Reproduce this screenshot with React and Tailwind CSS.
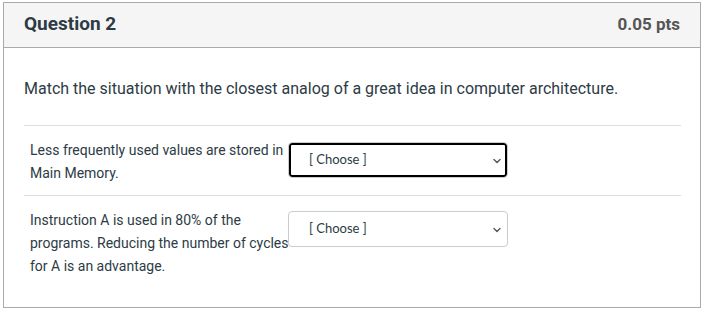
import { useState } from 'react'

const rows = [
  { id: 1, text: 'Less frequently used values are stored in Main Memory.', focused: true },
  { id: 2, text: 'Instruction A is used in 80% of the programs. Reducing the number of cycles for A is an advantage.', focused: false },
]

function Chevron() {
  return (
    <svg width="10" height="10" viewBox="0 0 10 10" fill="none" stroke="#555" strokeWidth="1.4"
         strokeLinecap="round" strokeLinejoin="round">
      <path d="M2 3.5l3 3 3-3" />
    </svg>
  )
}

function ChooseSelect({ focused }) {
  const [value, setValue] = useState('')
  return (
    <div className={`relative w-[220px] h-[36px] rounded-[4px] border border-[#c7cdd1] bg-white shrink-0
                     ${focused ? 'shadow-[inset_0_0_0_2px_#000]' : ''}`}>
      <select
        value={value}
        onChange={e => setValue(e.target.value)}
        className="appearance-none w-full h-full bg-transparent pl-[20px] pr-8 text-[13px] text-[#2d3b45] outline-none"
        style={{ fontFamily: 'Lato, "Noto Sans", sans-serif' }}
      >
        <option value="">[ Choose ]</option>
      </select>
      <span className="absolute right-[5px] top-[13px] pointer-events-none">
        <Chevron />
      </span>
    </div>
  )
}

export default function App() {
  return (
    <div className="w-[702px] h-[312px] bg-white pt-[2px] pl-[3px]"
         style={{ fontFamily: 'Roboto, "Liberation Sans", sans-serif' }}>
      <div className="w-[698px] h-[306px] border border-[#aaaaaa] bg-white">

        {/* Header */}
        <div className="h-[45px] bg-[#f5f5f5] border-b border-[#aaaaaa] flex items-center justify-between pl-[20px] pr-[20px] pb-[1px]">
          <span className="text-[19px] font-bold text-[#2d3b45]">Question 2</span>
          <span className="text-[17px] font-bold text-[#555555]">0.05 pts</span>
        </div>

        {/* Body */}
        <div className="pl-[20px] pr-[19px]">
          <p className="text-[16px] leading-[24px] text-[#2d3b45] mt-[29px] mb-[24px]">
            Match the situation with the closest analog of a great idea in computer architecture.
          </p>

          {rows.map(r => (
            <div key={r.id} className="border-t border-[#dddddd] flex pl-[6px] pt-[13px] pb-[10px]">
              <div className="w-[264px] shrink-0 text-[14px] leading-[23px] text-[#2d3b45]">
                {r.text}
              </div>
              <div className={`-ml-[6px] ${r.focused ? 'pt-[3px]' : 'pt-[2px]'}`}>
                <ChooseSelect focused={r.focused} />
              </div>
            </div>
          ))}
        </div>

      </div>
    </div>
  )
}
